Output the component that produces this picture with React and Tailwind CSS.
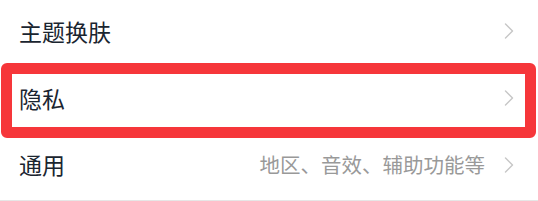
import React from "react";

function Chevron() {
  return (
    <svg width="10" height="16" viewBox="0 0 10 16" className="shrink-0">
      <polyline points="1.5,1 8.5,8 1.5,15" fill="none" stroke="#c6c6c6" strokeWidth="1.4" strokeLinecap="round" strokeLinejoin="round" />
    </svg>
  );
}

function Row({ title, sub, last }) {
  return (
    <div className={"flex items-center h-[67px] pl-[19px] pr-[24px] pb-[5px] " + (last ? "border-b border-[#e6e6e6]" : "")}>
      <span className="flex-1 text-[23px] leading-none text-[#1a2530]">{title}</span>
      {sub && <span className="text-[20.5px] leading-none text-[#999999] mr-[19px]">{sub}</span>}
      <Chevron />
    </div>
  );
}

export default function App() {
  return (
    <div
      className="relative w-[538px] h-[201px] bg-white overflow-hidden"
      style={{ fontFamily: '"Noto Sans CJK SC", "Noto Sans", sans-serif' }}
    >
      <Row title="主题换肤" />
      <Row title="隐私" />
      <Row title="通用" sub="地区、音效、辅助功能等" last />
      <div className="absolute left-[1px] top-[63px] w-[535px] h-[75px] border-[11px] border-[#f6363a] rounded-[6px]" />
    </div>
  );
}
